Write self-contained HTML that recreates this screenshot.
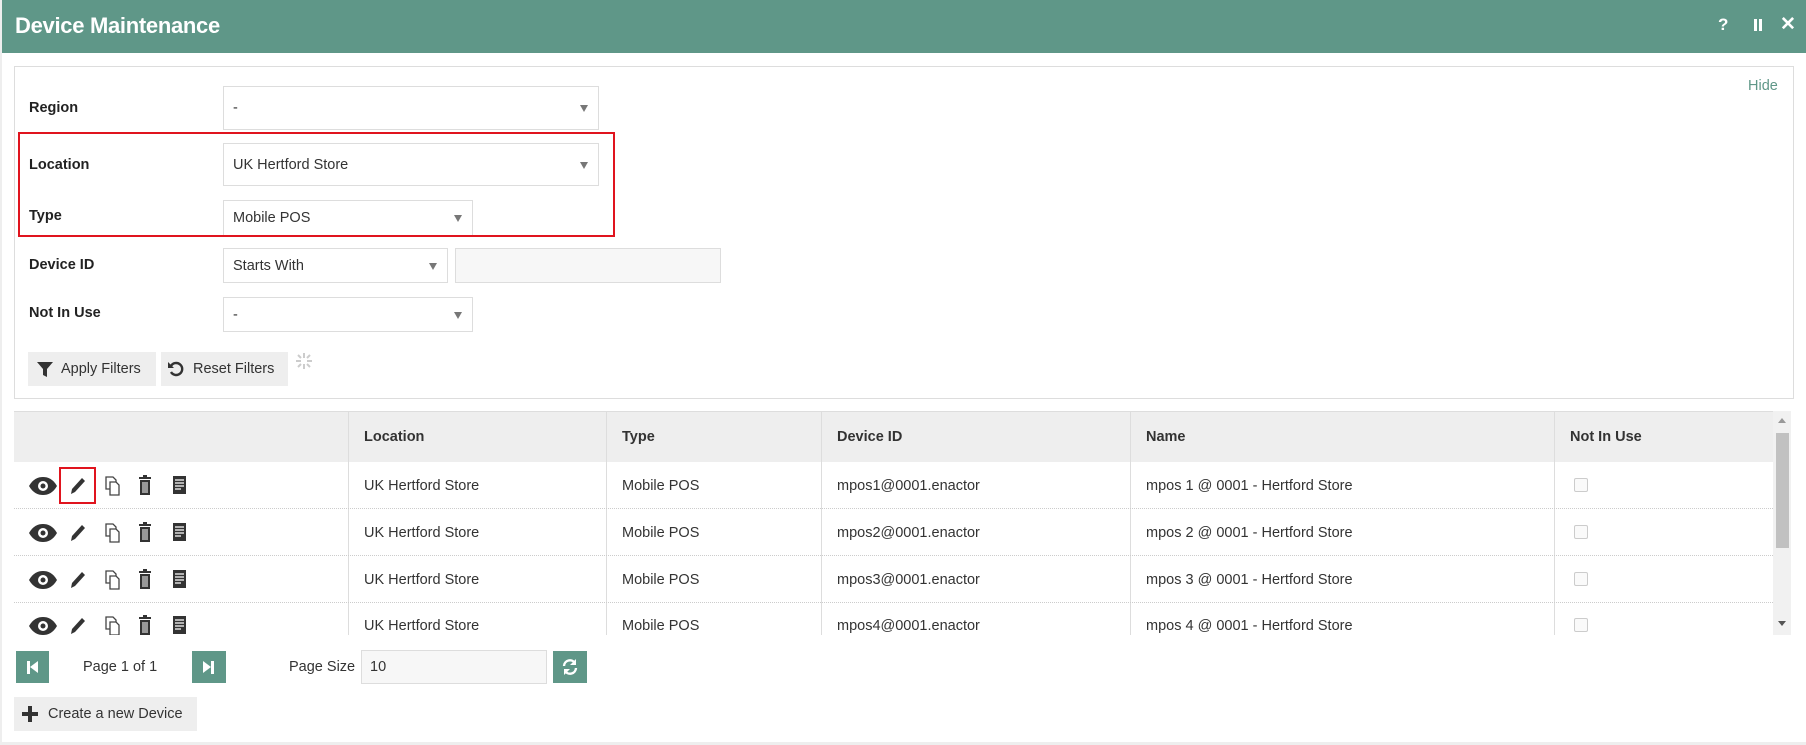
<!DOCTYPE html>
<html><head><meta charset="utf-8"><style>
*{box-sizing:border-box;margin:0;padding:0}
body{width:1806px;height:745px;background:#fff;font-family:"Liberation Sans",sans-serif;font-size:15px;color:#333;position:relative;overflow:hidden}
.a{position:absolute}
.hdr{left:2px;top:0;width:1804px;height:53px;background:#5f9788;color:#fff}
.hdr .t{left:13px;top:13px;font-size:22px;font-weight:bold;letter-spacing:-0.3px}
.lbl{font-weight:bold;color:#222;font-size:14.5px}
.sel{border:1px solid #ddd;background:#fff;padding-left:9px;display:flex;align-items:center;font-size:14.5px}
.sel:after{content:"";position:absolute;right:10px;top:50%;margin-top:-3px;border-left:4.5px solid transparent;border-right:4.5px solid transparent;border-top:7px solid #777}
.btn{background:#eee;display:flex;align-items:center;font-size:14.5px;color:#333}
.th{font-weight:bold;color:#333;font-size:14.5px}
.gbtn{background:#5f9788;}
.row{left:0;width:1759px;border-bottom:1px dotted #ccc;height:47px}
.cell{font-size:14.5px;color:#333}
.cb{width:14px;height:14px;border:1px solid #ccc;border-radius:2px;background:#fafafa}
</style></head><body>
<svg width="0" height="0" style="position:absolute"><defs><g id="ic">
<path d="M1 11C5 4 10 2 15 2s10 2 14 9c-4 7-9 9-14 9S5 18 1 11z" fill="#333"/><circle cx="15" cy="11" r="5" fill="#fff"/><circle cx="15" cy="11" r="2.5" fill="#333"/>
<path d="M43 19l1-5 10-11 3 3-10 11z" fill="#333"/>
<path d="M78 2h7l3 3v9h-10z" fill="none" stroke="#444" stroke-width="1.3"/><path d="M82 7h6l3 3v10h-9z" fill="#fff" stroke="#444" stroke-width="1.3"/>
<path d="M111 3h12M115 1h4" stroke="#333" stroke-width="2"/><path d="M112 5h10v15h-10z" fill="#333"/><path d="M115 7v11M117 7v11M119 7v11" stroke="#fff" stroke-width="1"/>
<path d="M145 1h13v18h-13z" fill="#333"/><path d="M147 5h9M147 8h9M147 11h9M147 14h6" stroke="#fff" stroke-width="1.2"/>
</g></defs></svg>
<div class="a" style="left:0;top:0;width:2px;height:745px;background:#eee"></div>
<div class="a hdr"><div class="a t">Device Maintenance</div>
<div class="a" style="left:1716px;top:15px;font-size:17px;font-weight:bold">?</div>
<div class="a" style="left:1752px;top:19px;width:3px;height:12px;background:#fff"></div>
<div class="a" style="left:1757px;top:19px;width:3px;height:12px;background:#fff"></div>
<div class="a" style="left:1778px;top:13px;font-size:19px;font-weight:bold">✕</div>
</div>
<div class="a" style="left:14px;top:66px;width:1780px;height:333px;border:1px solid #ddd"></div>
<div class="a" style="left:1748px;top:78px;color:#5f9788;font-size:14.5px">Hide</div>
<div class="a lbl" style="left:29px;top:100px">Region</div>
<div class="a sel" style="left:223px;top:86px;width:376px;height:44px">-</div>
<div class="a lbl" style="left:29px;top:157px">Location</div>
<div class="a sel" style="left:223px;top:143px;width:376px;height:43px">UK Hertford Store</div>
<div class="a lbl" style="left:29px;top:208px">Type</div>
<div class="a sel" style="left:223px;top:200px;width:250px;height:36px">Mobile POS</div>
<div class="a" style="left:18px;top:132px;width:597px;height:105px;border:2px solid #e0141e"></div>
<div class="a lbl" style="left:29px;top:257px">Device ID</div>
<div class="a sel" style="left:223px;top:248px;width:225px;height:35px">Starts With</div>
<div class="a" style="left:455px;top:248px;width:266px;height:35px;border:1px solid #ddd;background:#f7f7f7"></div>
<div class="a lbl" style="left:29px;top:305px">Not In Use</div>
<div class="a sel" style="left:223px;top:297px;width:250px;height:35px">-</div>
<div class="a btn" style="left:28px;top:352px;width:128px;height:34px;padding-left:8px">
<svg width="18" height="18" viewBox="0 0 18 18"><path d="M1 2h16l-6 7v8l-4-2V9z" fill="#333"/></svg><span style="margin-left:7px">Apply Filters</span></div>
<div class="a btn" style="left:161px;top:352px;width:127px;height:34px;padding-left:6px">
<svg width="18" height="18" viewBox="0 0 18 18"><path d="M4 6a6 6 0 1 1 0 6" stroke="#333" stroke-width="2.4" fill="none"/><path d="M1 2v6h6z" fill="#333"/></svg><span style="margin-left:8px">Reset Filters</span></div>
<svg class="a" style="left:295px;top:352px" width="18" height="18" viewBox="0 0 18 18" stroke="#ccc" stroke-width="2"><path d="M9 1v5M9 12v5M1 9h5M12 9h5M3 3l3 3M12 12l3 3M3 15l3-3M12 6l3-3"/></svg>

<div class="a" style="left:14px;top:411px;width:1759px;height:51px;background:#eee;border-top:1px solid #ddd"></div>
<div class="a" style="left:1773px;top:411px;width:18px;height:224px;background:#f1f1f1"></div>
<div class="a" style="left:1776px;top:433px;width:13px;height:115px;background:#c1c1c1"></div>
<div class="a" style="left:1778px;top:418px;border-left:4px solid transparent;border-right:4px solid transparent;border-bottom:5px solid #999"></div>
<div class="a" style="left:1778px;top:621px;border-left:4px solid transparent;border-right:4px solid transparent;border-top:5px solid #555"></div>
<div class="a" style="left:348px;top:411px;width:1px;height:224px;background:#ddd"></div>
<div class="a" style="left:606px;top:411px;width:1px;height:224px;background:#ddd"></div>
<div class="a" style="left:821px;top:411px;width:1px;height:224px;background:#ddd"></div>
<div class="a" style="left:1130px;top:411px;width:1px;height:224px;background:#ddd"></div>
<div class="a" style="left:1554px;top:411px;width:1px;height:224px;background:#ddd"></div>
<div class="a th" style="left:364px;top:429px">Location</div>
<div class="a th" style="left:622px;top:429px">Type</div>
<div class="a th" style="left:837px;top:429px">Device ID</div>
<div class="a th" style="left:1146px;top:429px">Name</div>
<div class="a th" style="left:1570px;top:429px">Not In Use</div>

<div class="a" style="left:14px;top:462px;width:1759px;height:173px;overflow:hidden">
<div class="a row" style="top:0"></div>
<div class="a row" style="top:47px"></div>
<div class="a row" style="top:94px"></div>
<div class="a row" style="top:141px"></div>
</div>

<div class="a" style="left:0;top:462px;width:1773px;height:173px;overflow:hidden">
 <div class="a cell" style="left:364px;top:16px">UK Hertford Store</div><div class="a cell" style="left:622px;top:16px">Mobile POS</div><div class="a cell" style="left:837px;top:16px">mpos1@0001.enactor</div><div class="a cell" style="left:1146px;top:16px">mpos 1 @ 0001 - Hertford Store</div><div class="a cb" style="left:1574px;top:16px"></div>
 <div class="a cell" style="left:364px;top:63px">UK Hertford Store</div><div class="a cell" style="left:622px;top:63px">Mobile POS</div><div class="a cell" style="left:837px;top:63px">mpos2@0001.enactor</div><div class="a cell" style="left:1146px;top:63px">mpos 2 @ 0001 - Hertford Store</div><div class="a cb" style="left:1574px;top:63px"></div>
 <div class="a cell" style="left:364px;top:110px">UK Hertford Store</div><div class="a cell" style="left:622px;top:110px">Mobile POS</div><div class="a cell" style="left:837px;top:110px">mpos3@0001.enactor</div><div class="a cell" style="left:1146px;top:110px">mpos 3 @ 0001 - Hertford Store</div><div class="a cb" style="left:1574px;top:110px"></div>
 <div class="a cell" style="left:364px;top:156px">UK Hertford Store</div><div class="a cell" style="left:622px;top:156px">Mobile POS</div><div class="a cell" style="left:837px;top:156px">mpos4@0001.enactor</div><div class="a cell" style="left:1146px;top:156px">mpos 4 @ 0001 - Hertford Store</div><div class="a cb" style="left:1574px;top:156px"></div>
 <svg class="a" style="left:28px;top:13px" width="170" height="22" viewBox="0 0 170 22"><use href="#ic"/></svg>
 <svg class="a" style="left:28px;top:60px" width="170" height="22" viewBox="0 0 170 22"><use href="#ic"/></svg>
 <svg class="a" style="left:28px;top:107px" width="170" height="22" viewBox="0 0 170 22"><use href="#ic"/></svg>
 <svg class="a" style="left:28px;top:153px" width="170" height="22" viewBox="0 0 170 22"><use href="#ic"/></svg>
</div>
<div class="a" style="left:59px;top:467px;width:37px;height:37px;border:2px solid #e0141e;z-index:3"></div>

<div class="a gbtn" style="left:16px;top:651px;width:33px;height:32px"><div class="a" style="left:11px;top:10px;width:3px;height:13px;background:#fff"></div><div class="a" style="left:14px;top:10px;border-top:6.5px solid transparent;border-bottom:6.5px solid transparent;border-right:8px solid #fff"></div></div>
<div class="a" style="left:83px;top:659px;font-size:14.5px">Page 1 of 1</div>
<div class="a gbtn" style="left:192px;top:651px;width:34px;height:32px"><div class="a" style="left:11px;top:10px;border-top:6.5px solid transparent;border-bottom:6.5px solid transparent;border-left:8px solid #fff"></div><div class="a" style="left:19px;top:10px;width:3px;height:13px;background:#fff"></div></div>
<div class="a" style="left:289px;top:659px;font-size:14.5px">Page Size</div>
<div class="a" style="left:361px;top:650px;width:186px;height:34px;border:1px solid #ddd;background:#f7f7f7;padding:8px 0 0 8px;font-size:14.5px">10</div>
<div class="a gbtn" style="left:553px;top:651px;width:34px;height:32px"><svg class="a" style="left:8px;top:7px" width="18" height="18" viewBox="0 0 18 18"><path d="M3 8a6 6 0 0 1 11-3M15 10a6 6 0 0 1-11 3" stroke="#fff" stroke-width="2.4" fill="none"/><path d="M15 1v6h-6zM3 17v-6h6z" fill="#fff"/></svg></div>
<div class="a btn" style="left:14px;top:697px;width:183px;height:34px;padding-left:8px"><svg width="16" height="16" viewBox="0 0 16 16"><path d="M6 0h4v6h6v4h-6v6h-4v-6h-6v-4h6z" fill="#333"/></svg><span style="margin-left:10px">Create a new Device</span></div>
<div class="a" style="left:0;top:742px;width:1806px;height:3px;background:#eee"></div>
</body></html>
